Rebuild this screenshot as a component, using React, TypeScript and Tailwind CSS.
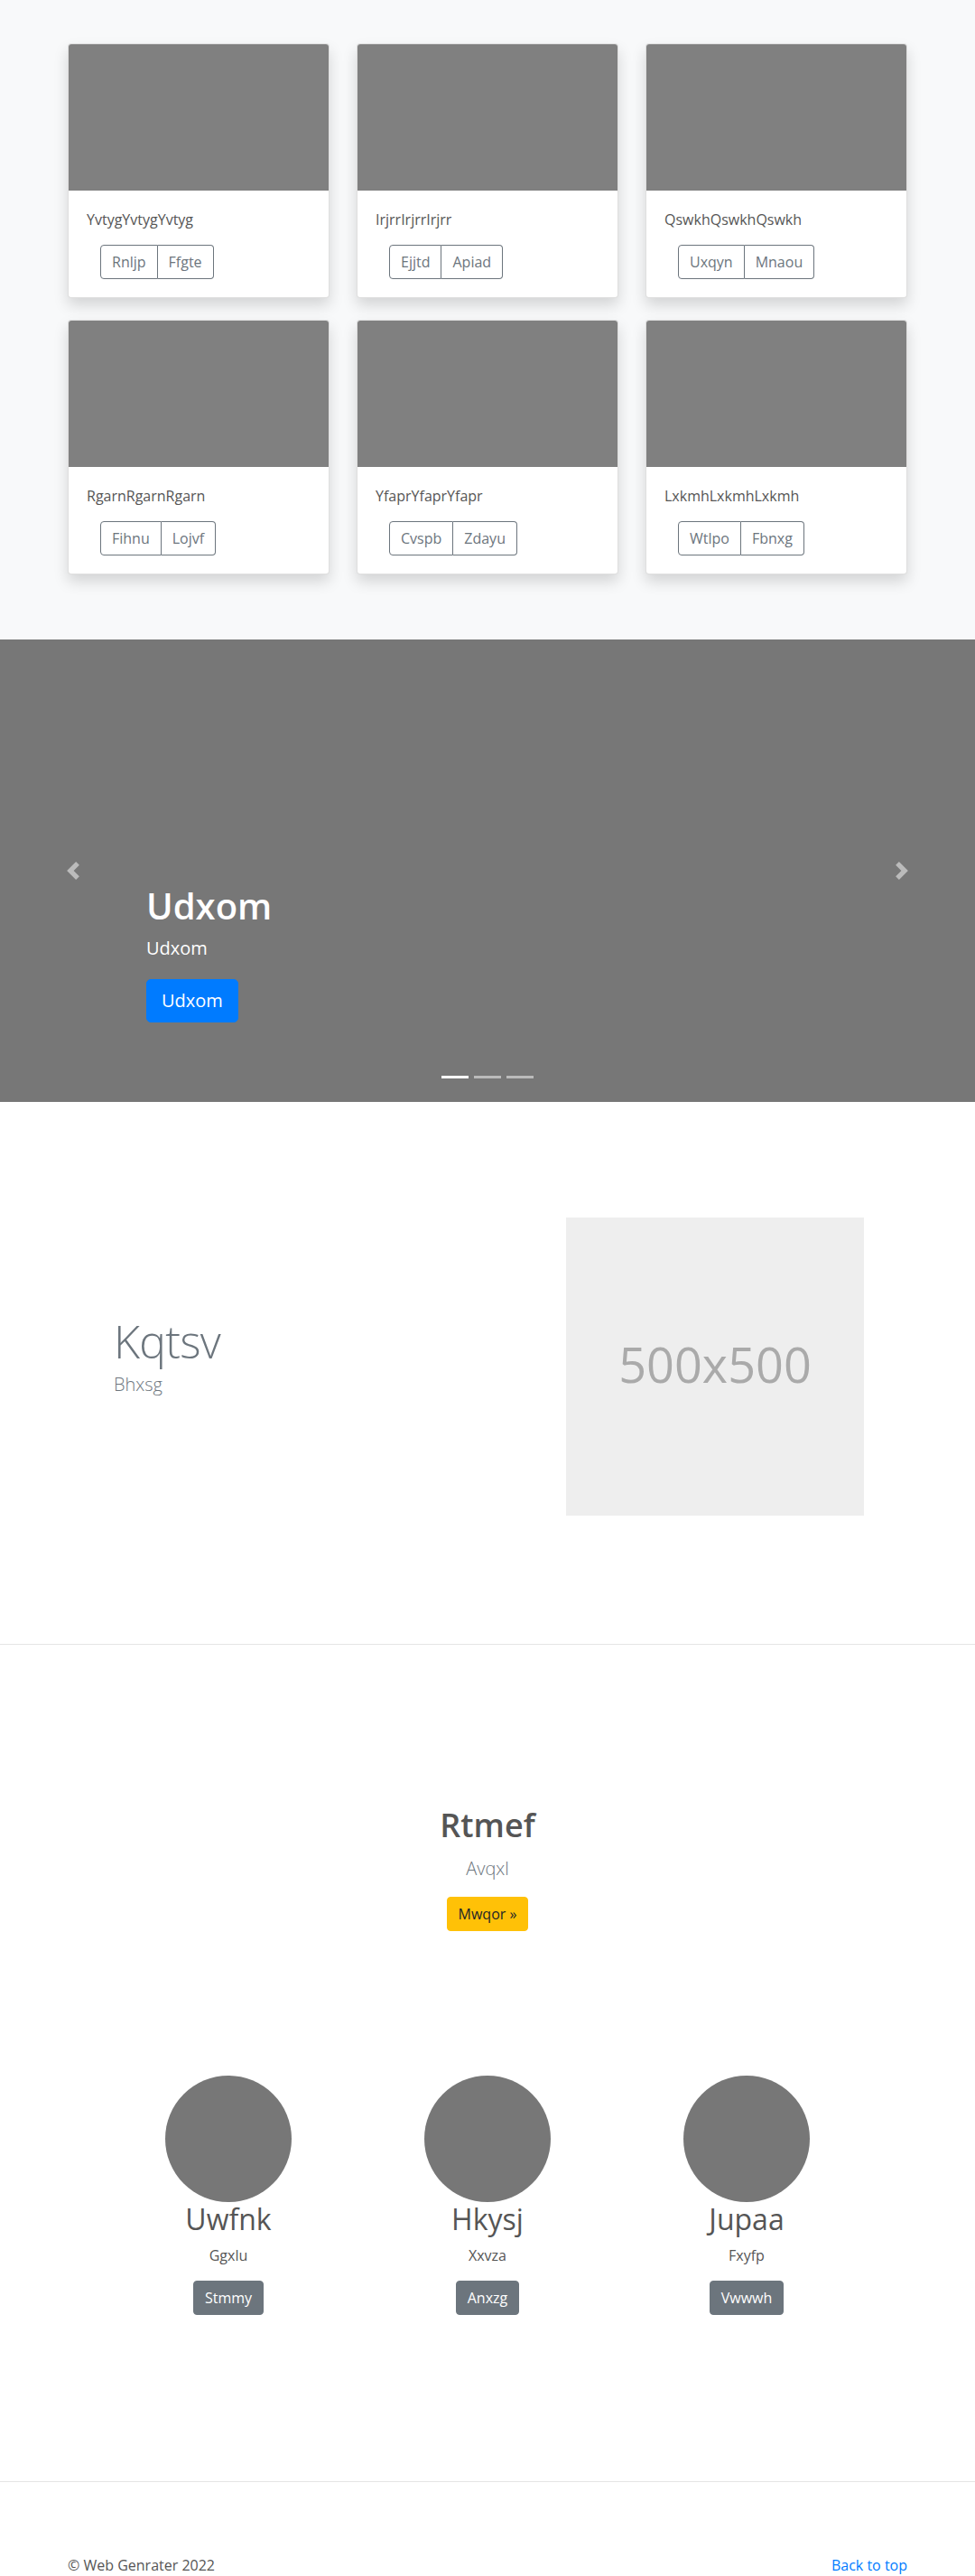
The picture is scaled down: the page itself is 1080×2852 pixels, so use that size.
import React from "react";

const cards = [
  { title: "YvtygYvtygYvtyg", a: "Rnljp", b: "Ffgte" },
  { title: "IrjrrIrjrrIrjrr", a: "Ejjtd", b: "Apiad" },
  { title: "QswkhQswkhQswkh", a: "Uxqyn", b: "Mnaou" },
  { title: "RgarnRgarnRgarn", a: "Fihnu", b: "Lojvf" },
  { title: "YfaprYfaprYfapr", a: "Cvspb", b: "Zdayu" },
  { title: "LxkmhLxkmhLxkmh", a: "Wtlpo", b: "Fbnxg" },
];

const team = [
  { name: "Uwfnk", sub: "Ggxlu", btn: "Stmmy" },
  { name: "Hkysj", sub: "Xxvza", btn: "Anxzg" },
  { name: "Jupaa", sub: "Fxyfp", btn: "Vwwwh" },
];

function Card({ title, a, b }: { title: string; a: string; b: string }) {
  return (
    <div className="bg-white border border-black/[.125] rounded-[4px] shadow-[0_8px_16px_rgba(0,0,0,0.15)] overflow-hidden">
      <div className="h-[162px] bg-[#808080]" />
      <div className="p-5">
        <p className="text-base leading-6 text-[#555] mb-4">{title}</p>
        <div className="ml-[15px] inline-flex text-[#6c757d] text-base leading-6">
          <span className="px-3 py-[6px] border border-[#6c757d] rounded-l-[4px]">{a}</span>
          <span className="px-3 py-[6px] border border-l-0 border-[#6c757d] rounded-r-[4px]">{b}</span>
        </div>
      </div>
    </div>
  );
}

function Chevron({ dir }: { dir: "prev" | "next" }) {
  return (
    <svg width="20" height="20" viewBox="0 0 8 8" fill="#fff" className="opacity-50">
      {dir === "prev" ? (
        <path d="M5.25 0l-4 4 4 4 1.5-1.5L4.25 4l2.5-2.5L5.25 0z" />
      ) : (
        <path d="M2.75 0l-1.5 1.5L3.75 4l-2.5 2.5L2.75 8l4-4-4-4z" />
      )}
    </svg>
  );
}

export default function App() {
  return (
    <div className="bg-white text-[#212529]" style={{ fontFamily: '"Open Sans", "Noto Sans", sans-serif' }}>
      {/* Album */}
      <section className="bg-[#f8f9fa] pt-12 pb-[72px]">
        <div className="w-[930px] mx-auto grid grid-cols-3 gap-x-[30px] gap-y-6">
          {cards.map((c) => (
            <Card key={c.title} {...c} />
          ))}
        </div>
      </section>

      {/* Carousel */}
      <section className="relative h-[512px] bg-[#777]">
        <div className="absolute left-0 top-0 bottom-0 w-[15%] flex items-center justify-center">
          <Chevron dir="prev" />
        </div>
        <div className="absolute right-0 top-0 bottom-0 w-[15%] flex items-center justify-center">
          <Chevron dir="next" />
        </div>
        <div className="absolute left-[15%] right-[15%] bottom-[88px] text-white">
          <h1 className="text-[40px] leading-[48px] font-semibold mb-2">Udxom</h1>
          <p className="text-[20px] leading-[30px] mb-[19px]">Udxom</p>
          <span className="inline-block bg-[#007bff] text-white text-[20px] leading-[30px] px-4 py-2 rounded-[5px] border border-[#007bff]">
            Udxom
          </span>
        </div>
        <div className="absolute left-0 right-0 bottom-[26px] flex justify-center gap-[6px]">
          <span className="w-[30px] h-[3px] bg-white" />
          <span className="w-[30px] h-[3px] bg-white/50" />
          <span className="w-[30px] h-[3px] bg-white/50" />
        </div>
      </section>

      {/* Featurette */}
      <section className="pt-[128px] pb-[142px]">
        <div className="w-[960px] mx-auto flex items-center pl-[66px] pr-[63px]">
          <div className="flex-1 pb-[18px]">
            <h2 className="text-[50px] leading-none font-light tracking-[-0.05rem] text-[#6c757d]">Kqtsv</h2>
            <p className="text-[20px] leading-[30px] font-light text-[#6c757d] mt-2">Bhxsg</p>
          </div>
          <div className="w-[330px] h-[330px] bg-[#eeeeee] flex items-center justify-center">
            <span className="text-[54px] text-[#aaaaaa] leading-none pb-[6px]">500x500</span>
          </div>
        </div>
      </section>

      <div className="border-t border-black/10" />

      {/* Jumbotron + team */}
      <section className="pt-[178px] pb-[184px] text-center">
        <h1 className="text-[36px] leading-[1.2] font-semibold text-[#555] mb-3">Rtmef</h1>
        <p className="text-[20px] leading-[30px] font-light text-[#6c757d] mb-4">Avqxl</p>
        <span className="inline-block bg-[#ffc107] border border-[#ffc107] text-[#212529] text-base leading-6 px-3 py-[6px] rounded-[4px]">
          Mwqor »
        </span>

        <div className="mt-[160px] flex justify-center">
          {team.map((t) => (
            <div key={t.name} className="w-[287px] flex flex-col items-center">
              <div className="w-[140px] h-[140px] rounded-full bg-[#777]" />
              <h2 className="text-[32px] leading-[1.2] font-normal text-[#555] mb-2">{t.name}</h2>
              <p className="text-base leading-6 text-[#555] mb-4">{t.sub}</p>
              <span className="inline-block bg-[#6c757d] border border-[#6c757d] text-white text-base leading-6 px-3 py-[6px] rounded-[4px]">
                {t.btn}
              </span>
            </div>
          ))}
        </div>
      </section>

      <div className="border-t border-black/10" />

      {/* Footer */}
      <footer className="w-[930px] mx-auto pt-[80px] flex justify-between text-base leading-6">
        <p className="text-[#555]">© Web Genrater 2022</p>
        <a href="#" className="text-[#007bff]">Back to top</a>
      </footer>
    </div>
  );
}
